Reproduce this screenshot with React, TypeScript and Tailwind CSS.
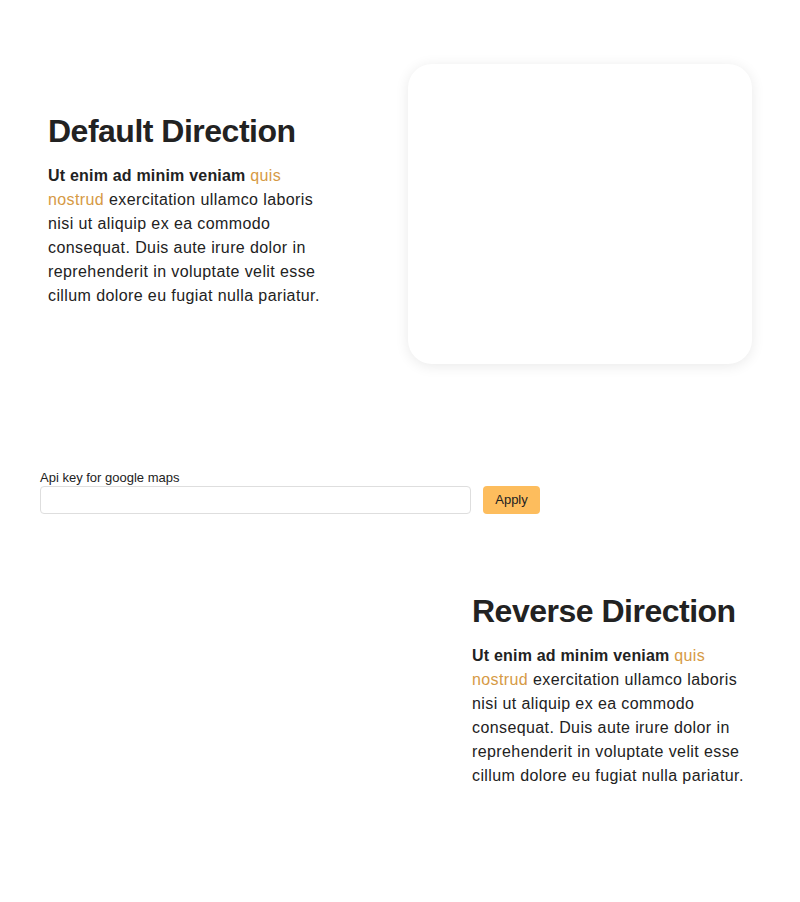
import React from "react";

function TextBlock({ title, className = "" }: { title: string; className?: string }) {
  return (
    <div className={"w-[280px] " + className}>
      <h2 className="text-[32px] leading-[40px] font-bold tracking-[-0.5px] text-[#222] mb-[13px] whitespace-nowrap">
        {title}
      </h2>
      <p className="text-[16px] leading-[24px] tracking-[0.4px] text-[#222]">
        <strong className="font-bold tracking-[0.2px]">Ut enim ad minim veniam </strong>
        <a className="text-[#d69a45]">quis nostrud</a> exercitation ullamco laboris nisi ut aliquip ex ea commodo
        consequat. Duis aute irure dolor in reprehenderit in voluptate velit esse cillum dolore eu fugiat nulla
        pariatur.
      </p>
    </div>
  );
}

export default function App() {
  return (
    <div className="min-h-[902px] bg-white" style={{ fontFamily: '"Liberation Sans", Arial, sans-serif' }}>
      <section className="pt-16 px-12 grid grid-cols-[344px_344px] gap-4">
        <TextBlock title="Default Direction" className="mt-[47px]" />
        <div className="h-[300px] rounded-[24px] bg-white shadow-[0_2px_14px_rgba(0,0,0,0.09)]" />
      </section>

      <div className="mt-[106px] px-10">
        <label className="block text-[13px] leading-[16px] text-[#222]">Api key for google maps</label>
        <div className="flex items-center gap-[12px]">
          <input
            type="text"
            className="w-[431px] h-[28px] rounded-[4px] border border-[#dedede] bg-white px-2 text-[13px] outline-none"
          />
          <button className="h-[28px] w-[57px] rounded-[4px] bg-[#fdbd5d] text-[13px] text-[#222]">Apply</button>
        </div>
      </div>

      <section className="mt-[30px] px-12 grid grid-cols-[344px_344px] gap-4">
        <div className="h-[300px]" />
        <TextBlock title="Reverse Direction" className="mt-[47px] justify-self-end" />
      </section>
    </div>
  );
}
